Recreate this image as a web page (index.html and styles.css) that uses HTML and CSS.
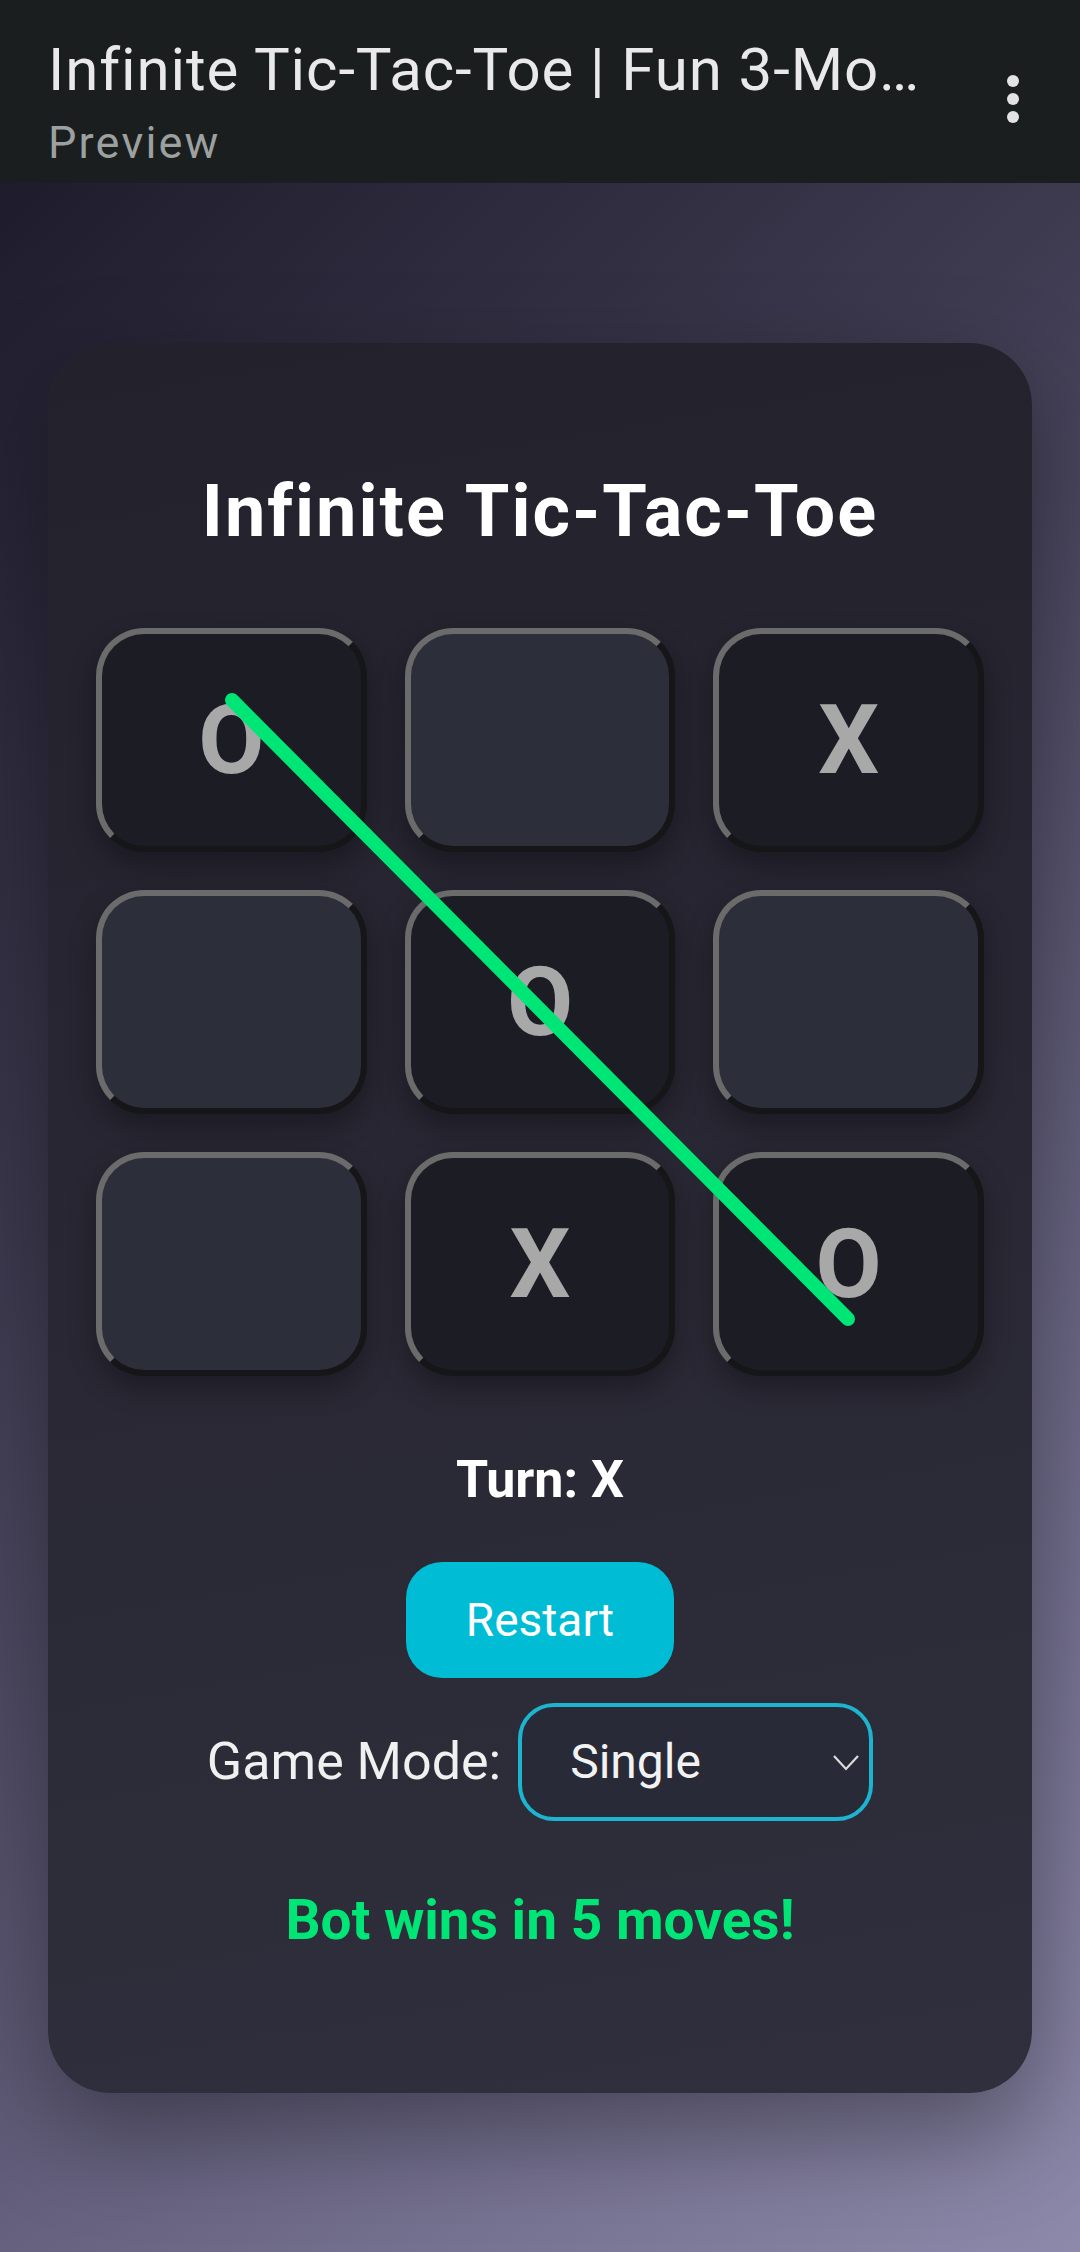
FILE: index.html
```html
<!DOCTYPE html>
<html lang="en">
<head>
<meta charset="utf-8">
<title>Infinite Tic-Tac-Toe</title>
<link rel="stylesheet" href="styles.css">
</head>
<body>
<header class="topbar">
  <div class="topbar-text">
    <div class="topbar-title">Infinite Tic-Tac-Toe | Fun 3-Mo…</div>
    <div class="topbar-sub">Preview</div>
  </div>
  <svg class="kebab" width="12" height="48" viewBox="0 0 12 48" aria-hidden="true">
    <circle cx="6" cy="6" r="6" fill="#e3e3e3"/>
    <circle cx="6" cy="24" r="6" fill="#e3e3e3"/>
    <circle cx="6" cy="42" r="6" fill="#e3e3e3"/>
  </svg>
</header>
<main class="stage">
  <section class="card">
    <h1 class="game-title">Infinite Tic-Tac-Toe</h1>
    <div class="board">
      <div class="cell filled">O</div>
      <div class="cell"></div>
      <div class="cell filled">X</div>
      <div class="cell"></div>
      <div class="cell filled">O</div>
      <div class="cell"></div>
      <div class="cell"></div>
      <div class="cell filled">X</div>
      <div class="cell filled">O</div>
      <svg class="win-line" aria-hidden="true">
        <line x1="136" y1="72" x2="752" y2="691" stroke="#00e676" stroke-width="14" stroke-linecap="round"/>
      </svg>
    </div>
    <div class="turn">Turn: X</div>
    <button class="restart" type="button">Restart</button>
    <div class="mode-row">
      <label class="mode-label" for="mode">Game Mode:</label>
      <div class="select-wrap">
        <select id="mode" class="mode-select">
          <option>Single</option>
          <option>Multi</option>
        </select>
        <svg class="chevron" width="26" height="16" viewBox="0 0 26 16" aria-hidden="true">
          <polyline points="1,1 13,14 25,1" fill="none" stroke="#dcdcdc" stroke-width="2.2"/>
        </svg>
      </div>
    </div>
    <div class="status">Bot wins in 5 moves!</div>
  </section>
</main>
</body>
</html>
```

FILE: styles.css
```css
* {
  box-sizing: border-box;
}

html, body {
  margin: 0;
  padding: 0;
}

body {
  width: 1080px;
  min-height: 2252px;
  font-family: Roboto, "Liberation Sans", sans-serif;
  background: #1a1e1e;
}

.topbar {
  height: 183px;
  background: #1a1e1e;
  display: flex;
  align-items: flex-start;
  padding: 35px 61px 0 48px;
}

.topbar-text {
  flex: 1;
  min-width: 0;
}

.topbar-title {
  font-size: 60px;
  line-height: 70px;
  letter-spacing: 0.9px;
  color: #e9e9e9;
  white-space: nowrap;
  overflow: hidden;
  text-overflow: ellipsis;
}

.topbar-sub {
  margin-top: 12px;
  font-size: 45px;
  line-height: 52px;
  letter-spacing: 2.2px;
  color: #9ca0a0;
}

.kebab {
  margin-top: 40px;
  flex: none;
}

.stage {
  height: 2069px;
  display: flex;
  align-items: center;
  justify-content: center;
  background: linear-gradient(135deg, #1e1c2c 0%, #3e3a50 35%, #6a6684 70%, #8d89aa 100%);
}

.card {
  width: 984px;
  height: 1750px;
  border-radius: 62px;
  padding: 48px 48px;
  background: linear-gradient(170deg, #22212c 0%, #282733 50%, #302f3d 100%);
  box-shadow: 0 40px 100px rgba(0, 0, 0, 0.38);
  display: flex;
  flex-direction: column;
  align-items: center;
}

.game-title {
  margin: 79px 0 0;
  font-size: 72px;
  line-height: 84px;
  font-weight: 700;
  letter-spacing: 2px;
  color: #ffffff;
}

.board {
  position: relative;
  margin-top: 74px;
  width: 100%;
  display: grid;
  grid-template-columns: repeat(3, 1fr);
  grid-auto-rows: 224px;
  gap: 38px;
}

.cell {
  border-radius: 48px;
  border: 6px solid;
  border-color: #6b6b6b #161619 #161619 #6b6b6b;
  background: #2c2e3a;
  box-shadow: 0 12px 28px rgba(0, 0, 0, 0.3);
  display: flex;
  align-items: center;
  justify-content: center;
  font-size: 96px;
  font-weight: 700;
  color: #a8a8a8;
}

.cell.filled {
  background: #1c1c24;
}

.win-line {
  position: absolute;
  left: 0;
  top: 0;
  width: 100%;
  height: 100%;
  overflow: visible;
  pointer-events: none;
}

.turn {
  margin-top: 73px;
  font-size: 52px;
  line-height: 61px;
  font-weight: 700;
  color: #ffffff;
}

.restart {
  margin-top: 52px;
  font-family: inherit;
  font-size: 46px;
  line-height: 54px;
  padding: 31px 60px;
  border: none;
  border-radius: 36px;
  background: #00bcd4;
  color: #ffffff;
}

.mode-row {
  margin-top: 25px;
  display: flex;
  align-items: center;
  gap: 17px;
}

.mode-label {
  font-size: 52px;
  line-height: 61px;
  color: #f0f0f0;
}

.select-wrap {
  position: relative;
  width: 355px;
  height: 118px;
}

.mode-select {
  appearance: none;
  -webkit-appearance: none;
  width: 100%;
  height: 100%;
  font-family: inherit;
  font-size: 48px;
  color: #f2f2f2;
  background: #282a38;
  border: 4px solid #1cb4cf;
  border-radius: 36px;
  padding: 0 60px 0 48px;
}

.chevron {
  position: absolute;
  right: 14px;
  top: 52px;
  pointer-events: none;
}

.status {
  margin-top: 66px;
  font-size: 55px;
  line-height: 66px;
  font-weight: 700;
  color: #00e676;
}
```
